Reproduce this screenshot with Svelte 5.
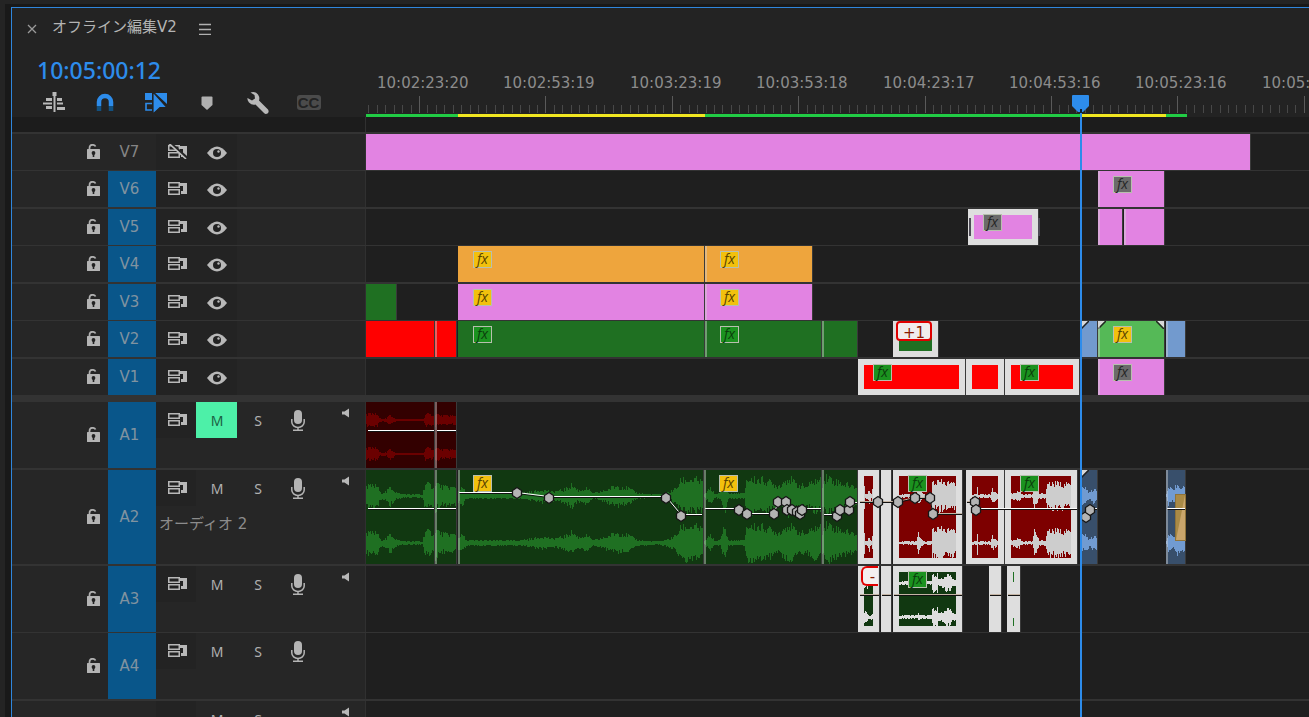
<script>
	/**
	 * Sequence timeline panel
	 * Track headers on the left, clips on a scrolled time canvas on the right
	 */

	// timeline position at the left edge of the lanes
	const VIEW_START = 366;
	const MAJOR_STEP = 126.4;

	const labels = [
		'10:02:23:20',
		'10:02:53:19',
		'10:03:23:19',
		'10:03:53:18',
		'10:04:23:17',
		'10:04:53:16',
		'10:05:23:16',
		'10:05:53:15'
	];

	const ticks = [];
	for (let i = -6; i < 110; i++) {
		ticks.push({ x: Math.round(419 + (i * MAJOR_STEP) / 15) - VIEW_START, major: i % 15 === 0 });
	}

	const renderBars = [
		{ from: 365, to: 458, color: '#21cc45' },
		{ from: 458, to: 705, color: '#f0e621' },
		{ from: 705, to: 1081, color: '#21cc45' },
		{ from: 1081, to: 1166, color: '#f0e621' },
		{ from: 1166, to: 1187, color: '#21cc45' }
	];

	const VIOLET = '#e283e2';
	const GREEN = '#1f7022';
	const playhead = 1080;

	let tracks = $state([
		{ id: 'V7', height: 36, gap: 1, syncOff: true, clips: [{ from: 366, to: 1250, fill: VIOLET }] },
		{ id: 'V6', height: 36, gap: 2, on: true, clips: [{ from: 1098, to: 1164, fill: VIOLET, edge: true, fx: 'grey' }] },
		{
			id: 'V5', height: 36, gap: 1, on: true,
			clips: [
				{ from: 968, to: 1038, fill: VIOLET, selected: true, fx: 'grey', handles: true },
				{ from: 1098, to: 1122, fill: VIOLET, edge: true },
				{ from: 1124, to: 1164, fill: VIOLET, edge: true }
			]
		},
		{
			id: 'V4', height: 36, gap: 2, on: true,
			clips: [
				{ from: 458, to: 704, fill: '#eea53d', fx: 'yellow' },
				{ from: 705, to: 812, fill: '#eea53d', edge: true, fx: 'yellow' }
			]
		},
		{
			id: 'V3', height: 36, gap: 1, on: true,
			clips: [
				{ from: 366, to: 396, fill: GREEN },
				{ from: 458, to: 704, fill: VIOLET, fx: 'yellow' },
				{ from: 705, to: 812, fill: VIOLET, edge: true, fx: 'yellow' }
			]
		},
		{
			id: 'V2', height: 36, gap: 2, on: true,
			clips: [
				{ from: 366, to: 434, fill: '#ff0000' },
				{ from: 435, to: 456, fill: '#ff0000', edge: true },
				{ from: 458, to: 704, fill: GREEN, fx: 'green' },
				{ from: 705, to: 821, fill: GREEN, edge: true, fx: 'green' },
				{ from: 822, to: 857, fill: GREEN, edge: true },
				{ from: 893, to: 938, fill: GREEN, selected: true, tip: '+1' },
				{ from: 1081, to: 1097, fill: '#729ace', fadeIn: true },
				{ from: 1098, to: 1164, fill: '#55b957', edge: true, fx: 'yellow', fadeIn: true, fadeOut: true },
				{ from: 1166, to: 1185, fill: '#729ace', edge: true }
			]
		},
		{
			id: 'V1', height: 36, gap: 7, on: true,
			clips: [
				{ from: 858, to: 965, fill: '#ff0000', selected: true, fx: 'green' },
				{ from: 966, to: 1004, fill: '#ff0000', selected: true },
				{ from: 1005, to: 1079, fill: '#ff0000', selected: true, fx: 'green' },
				{ from: 1098, to: 1164, fill: VIOLET, edge: true, fx: 'grey' }
			]
		},
		{
			id: 'A1', height: 66, gap: 2, on: true, audio: true, muted: true, speaker: true, mids: [18, 52],
			clips: [
				{ from: 366, to: 434, fill: '#330000', wave: '#6b0000', env: [[0, 7], [11, 7], [13, 2], [20, 2], [24, 6], [30, 1], [57, 1], [59, 7], [68, 6]] },
				{ from: 435, to: 456, fill: '#330000', wave: '#6b0000', edge: true, env: [[0, 8], [6, 5], [21, 5]] }
			],
			lines: [[[368, 430], [434, 430]], [[437, 430], [456, 430]]],
			keys: []
		},
		{
			id: 'A2', name: 'オーディオ 2', height: 94, gap: 2, on: true, audio: true, speaker: true, mids: [26, 73],
			clips: [
				{ from: 366, to: 434, fill: '#113811', wave: GREEN, env: [[0, 12], [11, 12], [14, 4], [20, 5], [24, 11], [30, 4], [36, 2], [56, 2], [59, 15], [68, 11]] },
				{ from: 435, to: 456, fill: '#113811', wave: GREEN, edge: true, env: [[0, 17], [6, 11], [21, 10]] },
				{ from: 458, to: 703, fill: '#113811', wave: GREEN, fx: 'yellow', edge: true, env: [[0, 7], [4, 10], [8, 3], [60, 3], [75, 5], [84, 8], [92, 5], [105, 7], [114, 13], [120, 6], [128, 9], [135, 3], [145, 6], [158, 12], [168, 10], [180, 3], [200, 2], [212, 5], [218, 9], [223, 19], [238, 19], [245, 16]] },
				{ from: 704, to: 821, fill: '#113811', wave: GREEN, fx: 'yellow', edge: true, env: [[0, 2], [6, 9], [11, 2], [16, 4], [20, 21], [24, 3], [40, 3], [42, 20], [60, 19], [74, 12], [84, 22], [92, 14], [102, 11], [110, 18], [117, 18]] },
				{ from: 822, to: 857, fill: '#113811', wave: GREEN, edge: true, env: [[0, 15], [5, 24], [10, 19], [20, 15], [35, 10]] },
				{ from: 858, to: 879, fill: '#7d0000', wave: '#cdcdcd', selected: true, env: [[6, 14], [7, 2], [9, 4], [11, 9], [13, 2], [15, 14]] },
				{ from: 881, to: 891, fill: '#dedede' },
				{ from: 893, to: 962, fill: '#7d0000', wave: '#cdcdcd', selected: true, fx: 'green', env: [[6, 2], [23, 2], [25, 11], [28, 4], [31, 2], [38, 2], [39, 17], [63, 15]] },
				{ from: 966, to: 1004, fill: '#7d0000', wave: '#cdcdcd', selected: true, env: [[6, 2], [10, 2], [11, 15], [12, 2], [24, 2], [26, 8], [32, 2]] },
				{ from: 1005, to: 1077, fill: '#7d0000', wave: '#cdcdcd', selected: true, fx: 'green', env: [[6, 3], [14, 6], [16, 2], [27, 2], [29, 15], [34, 3], [40, 3], [42, 15], [66, 14]] },
				{ from: 1081, to: 1097, fill: '#384f6b', wave: '#719bd1', fadeIn: true, env: [[0, 9], [5, 9], [8, 4], [12, 8], [16, 7]] },
				{ from: 1166, to: 1185, fill: '#384f6b', wave: '#719bd1', edge: true, dissolve: true, env: [[0, 2], [2, 10], [7, 6], [10, 13], [19, 10]] }
			],
			lines: [
				[[368, 508], [434, 508]],
				[[437, 508], [456, 508]],
				[[459, 492], [517, 492], [549, 496], [666, 496], [681, 514], [702, 514]],
				[[705, 508], [739, 508], [747, 513], [774, 513], [778, 502], [786, 502], [787, 508], [802, 508], [821, 508]],
				[[824, 514], [837, 514], [840, 508], [849, 508], [850, 502], [857, 502]],
				[[976, 508], [1077, 508]],
				[[1082, 516], [1090, 508], [1097, 508]],
				[[1167, 508], [1185, 508]]
			],
			darkLines: [[[860, 502], [880, 502]], [[882, 502], [898, 502], [915, 498], [930, 498], [933, 514], [962, 514]], [[967, 502], [975, 502]]],
			keys: [
				[517, 493], [549, 498], [666, 498], [681, 516],
				[739, 510], [747, 514], [774, 514], [778, 502], [786, 502], [787, 510], [792, 510], [797, 512], [800, 514], [802, 510],
				[837, 516], [840, 510], [849, 510], [850, 502],
				[878, 502], [898, 502], [915, 498], [930, 498], [933, 514],
				[975, 502], [976, 510], [1086, 517], [1090, 510]
			]
		},
		{
			id: 'A3', height: 66, gap: 1, on: true, audio: true, speaker: true, mids: [17, 51],
			clips: [
				{ from: 858, to: 879, fill: '#113811', wave: '#dedede', selected: true, tip: '-', env: [[6, 6], [9, 6], [10, 2], [15, 3]] },
				{ from: 881, to: 891, fill: '#dedede' },
				{ from: 893, to: 962, fill: '#113811', wave: '#dedede', selected: true, fx: 'green', env: [[6, 2], [24, 2], [25, 4], [27, 2], [38, 2], [39, 10], [44, 10], [45, 4], [50, 5], [53, 10], [57, 9], [59, 4], [63, 4]] },
				{ from: 989, to: 1001, fill: '#dedede' },
				{ from: 1007, to: 1020, fill: '#dedede', sliver: true }
			],
			darkLines: [[[860, 595], [879, 595]], [[882, 595], [891, 595]], [[894, 595], [962, 595]], [[990, 595], [1001, 595]], [[1008, 595], [1020, 595]]],
			keys: []
		},
		{ id: 'A4', height: 66, gap: 2, on: true, audio: true, clips: [] },
		{ id: '', height: 66, gap: 2, audio: true, bus: true, speaker: true, clips: [] }
	]);

	// y values of the automation lines are stored from the panel top
	const laneTop = { A1: 402, A2: 470, A3: 566 };

	function noise(n) {
		const v = Math.sin(n * 12.9898) * 43758.5453;
		return v - Math.floor(v);
	}

	// one column per pixel, amplitude interpolated over the envelope
	function wavePath(clip, mids) {
		let d = '';
		const width = clip.to - clip.from;
		for (const mid of mids) {
			for (let x = 0; x < width; x++) {
				let i = clip.env.findIndex((p) => p[0] > x);
				if (i === -1) i = clip.env.length - 1;
				if (i === 0) i = 1;
				const [x0, a0] = clip.env[i - 1];
				const [x1, a1] = clip.env[i];
				const t = Math.min(1, Math.max(0, (x - x0) / (x1 - x0)));
				const level = a0 + (a1 - a0) * t;
				const up = Math.max(1, Math.round(level * (0.55 + 0.5 * noise(clip.from + x))));
				const down = Math.max(1, Math.round(level * (0.55 + 0.5 * noise(clip.from + x * 3 + mid))));
				d += `M${x} ${mid - up}h1v${up + down}h-1z`;
			}
		}
		return d;
	}

	function toPoints(line, track) {
		return line.map(([x, y]) => `${x - VIEW_START},${y - laneTop[track.id] + 0.5}`).join(' ');
	}
</script>

{#snippet syncIcon(off)}
	<svg width="19" height="15" viewBox="0 0 19 15">
		<path d="M.75 1.750h10.500v4.500H.75zM.75 8.750h10.500v4.500H.75z" fill="none" stroke="#b8b8b8" stroke-width="1.500" />
		<path d="M12 2h7v11h-6v-3h2V5h-3z" fill="#b8b8b8" />
		{#if off}
			<path d="M2 -1L19 14" stroke="#262626" stroke-width="3" />
			<path d="M0.500 -1L18 15" stroke="#c0c0c0" stroke-width="1.600" />
		{/if}
	</svg>
{/snippet}

<div class="app">
	<section class="panel" aria-label="Timeline">
		<header>
			<div class="controls">
				<div class="tab">
					<button class="icon-button" aria-label="Close">
						<svg width="10" height="10" viewBox="0 0 10 10"><path d="M1 1l8 8M9 1L1 9" stroke="#9a9a9a" stroke-width="1.300" /></svg>
					</button>
					<h1>オフライン編集V2</h1>
					<button class="icon-button menu" aria-label="Panel menu">
						<svg width="12" height="12" viewBox="0 0 12 12"><path d="M0 1.500h12M0 6.500h12M0 11.500h12" stroke="#b0b0b0" stroke-width="1.400" /></svg>
					</button>
				</div>
				<div class="timecode">10:05:00:12</div>
				<div class="tools">
					<button aria-label="Insert as nest">
						<svg width="22" height="21" viewBox="0 0 22 21" fill="#b8b8b8">
							<path d="M9.500 0h4v4h-1v16h-2V4h-1zM3 6h6v3H3zM14 6h5v3h-5zM0 10.500h9v2H0zM14 10.500h6v2h-6zM3 14h6v3H3zM14 15h8v3h-8z" />
						</svg>
					</button>
					<button aria-label="Snap">
						<svg width="18" height="19" viewBox="0 0 18 19" fill="none" stroke-width="4.500">
							<path d="M3 13V9a6 6 0 0 1 12 0v4" stroke="#2d8ceb" />
							<path d="M3 13v5M15 13v5" stroke="#12507f" />
						</svg>
					</button>
					<button aria-label="Linked selection">
						<svg width="22" height="20" viewBox="0 0 22 20" fill="#2d8ceb">
							<path d="M0 0h7v7H0zM10 0h12v11z" />
							<path d="M7 10.500H1V17h6" fill="none" stroke="#2d8ceb" stroke-width="1.600" />
							<path d="M8 -1L22 14.500h-7L8 21z" stroke="#232323" stroke-width="1.200" />
						</svg>
					</button>
					<button aria-label="Add marker">
						<svg width="12" height="14" viewBox="0 0 12 14"><path d="M0.500 1.500q0-1 1-1h9q1 0 1 1V9L6 14 0.500 9z" fill="#b0b0b0" /></svg>
					</button>
					<button aria-label="Timeline display settings">
						<svg width="22" height="22" viewBox="0 0 22 22">
							<path d="M3.500 0.500Q8-1 11 2.500 13 5.500 12 8.500L21 17.500Q22.500 20 20.500 21.500 18.500 22.500 17 21L8.500 12.500Q5 13.500 2 10.500 0 8 0.500 6L5 8.500 8 6.500 7.500 3z" fill="#b8b8b8" />
						</svg>
					</button>
					<button class="captions" aria-label="Caption tracks"><span>CC</span></button>
				</div>
			</div>
			<div class="ruler">
				{#each labels as label, i}
					<span class="time" style:left="{Math.round(11 + i * MAJOR_STEP)}px">{label}</span>
				{/each}
				<svg class="ticks" height="18">
					{#each ticks as tick}
						<rect x={tick.x} y={tick.major ? 0 : 9} width="1" height={tick.major ? 17 : 8} fill={tick.major ? '#5a5a5a' : '#484848'} />
					{/each}
				</svg>
				<div class="render">
					{#each renderBars as bar}
						<i style:left="{bar.from - VIEW_START}px" style:width="{bar.to - bar.from}px" style:background={bar.color}></i>
					{/each}
				</div>
			</div>
		</header>
		<div class="band"><span></span></div>

		{#each tracks as track}
			<div class="track" style:height="{track.height}px" style:margin-bottom="{track.gap}px">
				<div class="head">
					<div class="lock">
						{#if !track.bus}
							<button class="icon-button" aria-label="Lock {track.id}">
								<svg width="13" height="17" viewBox="0 0 13 17">
									<path d="M2.500 6V4Q2.500 0.800 5.500 0.800q2.500 0 3 1.700" fill="none" stroke="#b0b0b0" stroke-width="1.700" />
									<rect y="5" width="13" height="10" rx="0.500" fill="#b4b4b4" />
									<circle cx="6.500" cy="9" r="1.900" fill="#222" />
									<path d="M5.700 9h1.600v4H5.700z" fill="#222" />
								</svg>
							</button>
						{/if}
					</div>
					<button class="target" class:on={track.on}>{track.id}</button>
					<div class="options">
						<div class="toggles">
							<button class="toggle sync" aria-label="Sync lock {track.id}">
								{#if !track.bus}{@render syncIcon(track.syncOff)}{/if}
							</button>
							{#if track.audio}
								<button class="toggle letter" class:muted={track.muted} onclick={() => (track.muted = !track.muted)}>M</button>
								<button class="toggle letter">S</button>
								<button class="toggle record" aria-label="Record">
									{#if !track.bus}
										<svg width="14" height="21" viewBox="0 0 14 21">
											<rect x="3" width="8" height="14" rx="4" fill="#b4b4b4" />
											<path d="M0.800 9v3a6.200 5.500 0 0 0 12.400 0V9M7 17v3M2 20.200h10" fill="none" stroke="#b4b4b4" stroke-width="1.500" />
										</svg>
									{/if}
								</button>
								{#if track.speaker}
									<svg class="speaker" width="7" height="10" viewBox="0 0 7 10"><path d="M0 3.500h2.500L7 0.500v9L2.500 6.500H0z" fill="#b8b8b8" /></svg>
								{/if}
							{:else}
								<button class="toggle eye" aria-label="Toggle output {track.id}">
									<svg width="20" height="14" viewBox="0 0 20 14">
										<path d="M0 7Q10-6 20 7 10 20 0 7z" fill="#b8b8b8" />
										<circle cx="10" cy="7" r="4" fill="#222" />
										<circle cx="11.500" cy="5.500" r="1.200" fill="#b8b8b8" />
									</svg>
								</button>
							{/if}
						</div>
						{#if track.name}
							<div class="name">{track.name}</div>
						{/if}
					</div>
				</div>
				<div class="lane">
					{#each track.clips as clip}
						<div
							class="clip"
							class:selected={clip.selected}
							class:edge={clip.edge}
							style:left="{clip.from - VIEW_START}px"
							style:width="{clip.to - clip.from}px"
							style:background-color={clip.fill}
						>
							{#if clip.env}
								<svg class="wave" shape-rendering="crispEdges"><path d={wavePath(clip, track.mids)} fill={clip.wave} /></svg>
							{/if}
							{#if clip.handles}
								<i class="handle in"></i><i class="handle out"></i>
							{/if}
							{#if clip.fadeIn}
								<svg class="fade" width="8" height="8"><path d="M0 0h7L0 7z" fill="#d8d8d8" /><path d="M8 0L0 8" stroke="#222" stroke-width="1.500" /></svg>
							{/if}
							{#if clip.fadeOut}
								<svg class="fade end" width="8" height="8"><path d="M8 0H1l7 7z" fill="#d8d8d8" /><path d="M0 0l8 8" stroke="#222" stroke-width="1.500" /></svg>
							{/if}
							{#if clip.dissolve}
								<svg class="dissolve" width="11" height="47"><rect width="11" height="47" fill="#c9a56b" /><path d="M1 46V1h9z" fill="#a98a46" /><rect x="0.500" y="0.500" width="10" height="46" fill="none" stroke="#8f7339" /></svg>
							{/if}
							{#if clip.sliver}
								<i class="sliver"></i><i class="sliver low"></i>
							{/if}
							{#if clip.tip}
								<span class="tip" class:cut={clip.tip === '-'}>{clip.tip}</span>
							{/if}
						</div>
					{/each}
					{#if track.keys}
						<svg class="automation">
							{#each track.lines ?? [] as line}
								<polyline points={toPoints(line, track)} stroke="#111" transform="translate(0 1)" />
								<polyline points={toPoints(line, track)} stroke="#fff" />
							{/each}
							{#each track.darkLines ?? [] as line}
								<polyline points={toPoints(line, track)} stroke="#c4b4a4" transform="translate(0 -1)" />
								<polyline points={toPoints(line, track)} stroke="#111" />
							{/each}
							{#each track.keys as [x, y]}
								<path class="key" transform="translate({x - VIEW_START} {y - laneTop[track.id]})" d="M0-5.500L4.500-2.500v5L0 5.500-4.500 2.500v-5z" />
							{/each}
						</svg>
					{/if}
					{#each track.clips.filter((c) => c.fx) as clip}
						<span class="fx {clip.fx}" style:left="{clip.from - VIEW_START + 15}px">fx</span>
					{/each}
				</div>
			</div>
		{/each}

		<div class="playhead" style:--at="{playhead - VIEW_START}px">
			<svg width="17" height="18" viewBox="0 0 17 18"><path d="M0 1q0-1 1-1h15q1 0 1 1v10l-6 6H6l-6-6z" fill="#2d8ceb" /><path d="M8 14h2v4H8z" fill="#0c2038" /></svg>
		</div>
	</section>
</div>

<style>
	:global(body) {
		background: #191919;
	}

	.app {
		box-sizing: border-box;
		height: 100vh;
		overflow: hidden;
		padding: 3px 0 0 6px;
		border-top: 4px solid #242424;
		border-left: 5px solid #242424;
		font-family: 'DejaVu Sans', 'Noto Sans CJK JP', sans-serif;
		font-size: 15px;
		color: #8c8c8c;
	}

	.panel {
		--head: 354px;
		box-sizing: border-box;
		position: relative;
		height: 100%;
		overflow: hidden;
		background: #333;
		border-top: 1px solid #2f86dc;
		border-left: 1px solid #2f86dc;
	}

	button {
		display: flex;
		align-items: center;
		justify-content: center;
		margin: 0;
		padding: 0;
		border: none;
		background: none;
		font: inherit;
		color: inherit;
	}

	svg {
		display: block;
		flex: none;
	}

	header {
		display: flex;
		background: #232323;
	}

	.controls {
		width: var(--head);
		flex: none;
	}

	.tab {
		display: flex;
		align-items: center;
		height: 38px;
		padding-left: 15px;
		gap: 15px;
	}

	.tab .icon-button {
		padding-top: 4px;
	}

	.tab .menu {
		margin-left: 7px;
	}

	h1 {
		margin: 0;
		font-size: 15px;
		font-weight: 400;
		line-height: 24px;
		color: #b4b4b4;
		white-space: nowrap;
	}

	.timecode {
		padding: 6px 0 0 25px;
		line-height: 36px;
		font-family: 'Noto Sans', sans-serif;
		font-size: 23px;
		font-weight: 500;
		color: #2d8ceb;
	}

	.tools {
		display: flex;
		height: 29px;
		padding-left: 16px;
	}

	.tools button {
		width: 51px;
	}

	.captions span {
		width: 24px;
		border-radius: 3px;
		background: #4b4b4b;
		color: #232323;
		font-family: 'Liberation Sans', sans-serif;
		font-size: 15px;
		font-weight: 700;
		line-height: 15px;
	}

	.ruler {
		position: relative;
		flex: 1;
		display: flex;
		flex-direction: column;
		justify-content: flex-end;
		overflow: hidden;
	}

	.time {
		position: absolute;
		top: 64px;
		line-height: 22px;
		white-space: nowrap;
	}

	.ticks {
		width: 100%;
	}

	.render {
		position: relative;
		height: 3px;
	}

	.render i {
		position: absolute;
		top: 0;
		height: 3px;
	}

	.band {
		height: 15px;
		margin-bottom: 2px;
		background: #1c1c1c;
	}

	.band span {
		display: block;
		box-sizing: border-box;
		width: var(--head);
		height: 100%;
		border-right: 1px solid #303030;
	}

	.track {
		display: flex;
	}

	.head {
		box-sizing: border-box;
		width: var(--head);
		flex: none;
		display: flex;
		background: #262626;
		border-right: 1px solid #303030;
	}

	.lock {
		display: flex;
		align-items: center;
		justify-content: flex-end;
		width: 88px;
		padding-right: 8px;
	}

	.target {
		width: 48px;
		padding-right: 5px;
		color: #858585;
	}

	.target.on {
		background: #09568a;
		color: #8093a0;
	}

	.options {
		flex: 1;
	}

	.toggles {
		display: flex;
		height: 36px;
	}

	.toggle {
		width: 41px;
	}

	.sync,
	.eye {
		background: #232323;
	}

	.sync {
		width: 40px;
		padding: 0 0 1px 2px;
	}

	.eye {
		padding: 2px 0 0 1px;
	}

	.record {
		width: 39px;
	}

	.letter {
		padding-left: 1px;
		font-family: 'Noto Sans', sans-serif;
		font-size: 14px;
		color: #b0b0b0;
	}

	.muted {
		background: #4df0a8;
		color: #1c6044;
	}

	.speaker {
		margin: 6px 16px 0 auto;
	}

	.name {
		padding-left: 3px;
		line-height: 36px;
		white-space: nowrap;
	}

	.lane {
		position: relative;
		flex: 1;
		background: #1f1f1f;
		overflow: hidden;
	}

	.clip {
		position: absolute;
		box-sizing: border-box;
		top: 0;
		bottom: 0;
		box-shadow: 1px 0 #3a3a3a;
	}

	.clip.edge::before {
		content: '';
		position: absolute;
		inset: 0 auto 0 0;
		width: 2px;
		background: rgba(210, 210, 210, 0.45);
		z-index: 1;
	}

	.clip.selected::after {
		content: '';
		position: absolute;
		inset: 0;
		border: 6px solid #dedede;
	}

	.wave {
		width: 100%;
		height: 100%;
	}

	.handle {
		position: absolute;
		z-index: 1;
		top: 9px;
		width: 2px;
		height: 18px;
		background: #4d4a55;
	}

	.handle.in {
		left: 1px;
	}

	.handle.out {
		left: 70px;
	}

	.fade {
		position: absolute;
		top: 0;
		left: 0;
	}

	.fade.end {
		left: auto;
		right: 0;
	}

	.dissolve {
		position: absolute;
		top: 24px;
		right: -1px;
	}

	.sliver {
		position: absolute;
		top: 6px;
		left: 6px;
		width: 1px;
		height: 10px;
		background: #1f7022;
	}

	.sliver.low {
		top: 52px;
		height: 8px;
	}

	.tip {
		position: absolute;
		z-index: 2;
		box-sizing: border-box;
		top: 0;
		left: 3px;
		right: 6px;
		height: 20px;
		border: 2px solid #e00000;
		border-radius: 4px;
		background: #f0ecec;
		color: #8a1a00;
		line-height: 20px;
		text-align: center;
	}

	.tip.cut {
		right: 1px;
		border-right: none;
		border-radius: 6px 0 0 6px;
		background: #f4f0f0;
		line-height: 18px;
		padding-left: 4px;
	}

	.automation {
		position: absolute;
		inset: 0;
		width: 100%;
		height: 100%;
	}

	.automation polyline {
		fill: none;
		stroke-width: 1;
	}

	.key {
		fill: #b4b4b4;
		stroke: #161616;
		stroke-width: 1.3;
	}

	.fx {
		position: absolute;
		top: 5px;
		box-sizing: border-box;
		width: 19px;
		height: 17px;
		border: 1px solid #b8bfae;
		background: #f2c10d;
		color: #5a4300;
		font-family: 'Open Sans', sans-serif;
		font-style: italic;
		font-size: 14px;
		line-height: 14px;
		text-align: center;
	}

	.fx.green {
		background: #1b921f;
		color: #0b3d0c;
	}

	.fx.grey {
		background: #6b6b6b;
		color: #262626;
	}

	.playhead {
		position: absolute;
		top: 87px;
		bottom: 0;
		left: calc(var(--head) + var(--at));
		width: 2px;
		background: linear-gradient(transparent 18px, #2d8ceb 18px);
	}

	.playhead svg {
		margin-left: -8px;
	}
</style>
